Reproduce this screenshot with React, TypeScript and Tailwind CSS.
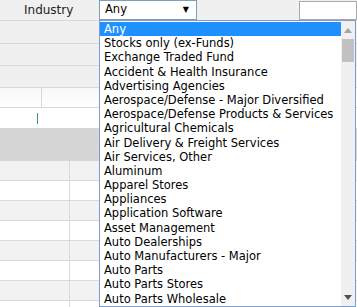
import React from 'react';

const industries = [
  'Any',
  'Stocks only (ex-Funds)',
  'Exchange Traded Fund',
  'Accident & Health Insurance',
  'Advertising Agencies',
  'Aerospace/Defense - Major Diversified',
  'Aerospace/Defense Products & Services',
  'Agricultural Chemicals',
  'Air Delivery & Freight Services',
  'Air Services, Other',
  'Aluminum',
  'Apparel Stores',
  'Appliances',
  'Application Software',
  'Asset Management',
  'Auto Dealerships',
  'Auto Manufacturers - Major',
  'Auto Parts',
  'Auto Parts Stores',
  'Auto Parts Wholesale',
];

export default function App() {
  return (
    <div className="relative w-[357px] h-[307px] overflow-hidden bg-white text-black font-['DejaVu_Sans',sans-serif]">
      {/* Filter table behind the open select */}
      <div className="flex flex-col">
        <div className="h-[21px] flex items-center bg-[#f0f0f0] border-b border-[#d9d9d9]">
          <span className="w-[99px] pl-[24px] text-[12px] leading-[20px] text-[#222]">Industry</span>
          <div className="w-[98px] h-[20px] border border-[#7f9db9] bg-white flex items-center justify-between px-[5px]">
            <span className="text-[11.5px]">Any</span>
            <span className="text-[8px] mr-[2px]">▼</span>
          </div>
          <div className="ml-auto w-[58px] h-[19px] border border-[#a9a9a9] bg-white" />
        </div>
        <div className="h-[23px] bg-[#f0f0f0] border-b border-[#d9d9d9]" />
        <div className="h-[22px] bg-[#f0f0f0] border-b border-[#d9d9d9]" />
        <div className="h-[22px] bg-[#f0f0f0] border-b border-[#d9d9d9]" />
        <div className="h-[20px] flex bg-gradient-to-b from-[#f8f8f8] to-white border-b border-[#d9d9d9]">
          <div className="w-[42px] border-r border-[#d9d9d9]" />
        </div>
        <div className="h-[20px] flex items-center bg-white">
          <div className="ml-[37px] w-[1px] h-[11px] bg-[#3a9a5a]" />
        </div>
        <div className="h-[33px] bg-[#d6d6d6]" />
        {['#f2f2f2', '#ffffff', '#f2f2f2', '#ffffff', '#f2f2f2', '#ffffff', '#f2f2f2', '#ffffff'].map((c, i) => (
          <div key={i} className="h-[20px] flex border-b border-[#d9d9d9]" style={{ backgroundColor: c }}>
            <div className="w-[70px] border-r border-[#d9d9d9]" />
          </div>
        ))}
      </div>

      {/* Open dropdown list */}
      <div className="absolute left-[99px] top-[20px] w-[257px] h-[287px] border border-[#7e9bd6] bg-white flex">
        <ul className="flex-1 overflow-hidden pt-[1px]">
          {industries.map((name, i) => (
            <li
              key={name}
              className={`h-[14.2px] leading-[14.2px] pl-[4px] text-[11.5px] whitespace-nowrap ${
                i === 0 ? 'bg-[#1e90ff] text-white' : 'text-black'
              }`}
            >
              {name}
            </li>
          ))}
        </ul>
        <div className="w-[14px] bg-[#f0f0f0] flex flex-col items-center">
          <div className="h-[18px] flex items-center justify-center">
            <svg width="8" height="5" viewBox="0 0 8 5"><path d="M0 5 L4 0 L8 5 Z" fill="#a3a3a3" /></svg>
          </div>
          <div className="w-[12px] h-[23px] bg-[#c1c1c1]" />
          <div className="mt-auto h-[18px] flex items-center justify-center">
            <svg width="8" height="5" viewBox="0 0 8 5"><path d="M0 0 L8 0 L4 5 Z" fill="#505050" /></svg>
          </div>
        </div>
      </div>
    </div>
  );
}
